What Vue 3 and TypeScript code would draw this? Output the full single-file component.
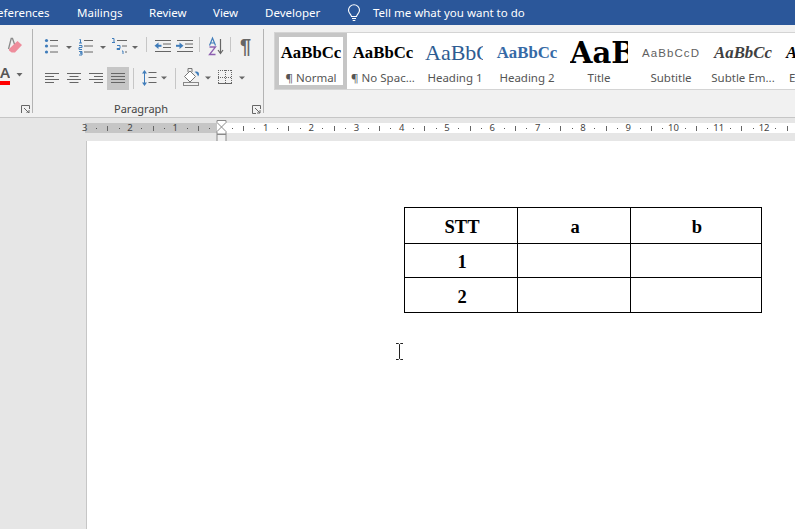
<script setup lang="ts">
interface Tick { x: number; kind: 'dot' | 'line' | 'num'; label?: string }
const pxPerUnit = 45.3
const origin = 220.5
const ticks: Tick[] = []
for (let u = -3; u <= 13; u++) {
  const x = origin + u * pxPerUnit
  if (u !== 0) ticks.push({ x, kind: 'num', label: String(Math.abs(u)) })
  ticks.push({ x: x + pxPerUnit * 0.25, kind: 'dot' })
  ticks.push({ x: x + pxPerUnit * 0.5, kind: 'line' })
  ticks.push({ x: x + pxPerUnit * 0.75, kind: 'dot' })
}
const visibleTicks = ticks.filter(t => t.x < 795 && !(t.x > 214 && t.x < 227))

const tabs = ['eferences', 'Mailings', 'Review', 'View', 'Developer']
const styles = [
  { name: 'Normal', mark: true, cls: 'p-normal', sample: 'AaBbCc', selected: true },
  { name: 'No Spac...', mark: true, cls: 'p-normal', sample: 'AaBbCc' },
  { name: 'Heading 1', mark: false, cls: 'p-h1', sample: 'AaBbC' },
  { name: 'Heading 2', mark: false, cls: 'p-h2', sample: 'AaBbCc' },
  { name: 'Title', mark: false, cls: 'p-title', sample: 'AaB' },
  { name: 'Subtitle', mark: false, cls: 'p-sub', sample: 'AaBbCcD' },
  { name: 'Subtle Em...', mark: false, cls: 'p-em', sample: 'AaBbCc' },
  { name: 'Emphasis', mark: false, cls: 'p-emph', sample: 'AaBbCc' },
]
const rows = [
  ['STT', 'a', 'b'],
  ['1', '', ''],
  ['2', '', ''],
]
</script>

<template>
  <div class="app">
    <header class="tabs">
      <span v-for="t in tabs" :key="t" class="tab">{{ t }}</span>
      <svg class="bulb" width="14" height="18" viewBox="0 0 14 18" fill="none" stroke="#fff" stroke-width="1.1">
        <path d="M4.5 12.5C4.2 10.5 1.5 9.3 1.5 6.2a5.5 5.5 0 0 1 11 0c0 3.1-2.7 4.3-3 6.3z" />
        <path d="M5 14.5h4M5.7 16.5h2.6" />
      </svg>
      <span class="tell">Tell me what you want to do</span>
    </header>

    <section class="ribbon">
      <div class="g-font">
        <svg class="eraser" width="16" height="19" viewBox="0 0 16 19">
          <path d="M1.500 14 4.200 3.500h1.300L8.500 12" fill="none" stroke="#8a8a8a" stroke-width="1.3" />
          <path d="M2 14 10.500 6 15 10l-7 7.500H4.600L2 15.500z" fill="#ee8d9c" />
        </svg>
        <div class="font-color">
          <div class="fc-a"><span class="letter-a">A</span><i class="red"></i></div>
          <svg class="arrow" width="7" height="4" viewBox="0 0 7 4"><path d="M.5 0h6L3.5 3.5z" fill="#666" /></svg>
        </div>
        <svg class="launch launch-font" width="9" height="9" viewBox="0 0 9 9" fill="none" stroke="#666">
          <path d="M8.5 4V.5H.5v8H4M3 3l5 5M8 5v3H5" />
        </svg>
      </div>

      <div class="g-para">
        <div class="row row1">
          <svg class="ml0" width="30" height="20" viewBox="0 0 30 20">
            <g fill="#3f7cba"><circle cx="2.5" cy="4.5" r="1.6" /><circle cx="2.5" cy="10" r="1.6" /><circle cx="2.5" cy="16" r="1.6" /></g>
            <path d="M6 4.5h8M6 10h8M6 16h8" stroke="#666" />
            <path d="M22 10h6l-3 3z" fill="#666" />
          </svg>
          <svg class="ml4" width="30" height="20" viewBox="0 0 30 20">
            <g fill="none" stroke="#3f7cba"><path d="M1.5 3.500h1v3.500M1 7h3M1 9.500h3v2H1v2h3M1 15.500h3v1.500H2h2v2H1" /></g>
            <path d="M6 4.500h9M6 10h9M6 16h9" stroke="#666" />
            <path d="M22 10h6l-3 3z" fill="#666" />
          </svg>
          <svg class="ml3" width="28" height="20" viewBox="0 0 28 20">
            <path d="M1 2.500h2v4M1 6.500h3M6 9.500h3v3H6v1h3M11 15h1v3" fill="none" stroke="#3f7cba" />
            <path d="M6 4.500h10M11 10h5M14 16h2" stroke="#666" />
            <path d="M21 10h6l-3 3z" fill="#666" />
          </svg>
          <i class="sep ml7"></i>
          <svg class="ml7" width="17" height="20" viewBox="0 0 17 20">
            <path d="M1 4.500h16M9 8h8M9 11.500h8M1 15.500h16" stroke="#666" />
            <path d="M7.500 9.800H3.500" stroke="#3f7cba" stroke-width="2" />
            <path d="M.5 9.800 4.500 6.500v6.600z" fill="#3f7cba" />
          </svg>
          <svg class="ml5" width="17" height="20" viewBox="0 0 17 20">
            <path d="M1 4.500h16M9 8h8M9 11.500h8M1 15.500h16" stroke="#666" />
            <path d="M0 9.800h4" stroke="#3f7cba" stroke-width="2" />
            <path d="M7.500 9.800 3.500 6.500v6.600z" fill="#3f7cba" />
          </svg>
          <i class="sep ml6"></i>
          <svg class="ml8" width="16" height="20" viewBox="0 0 16 20">
            <path d="M1.500 9.500 4.500 2l3 7.500M2.500 7h4" fill="none" stroke="#3f7cba" stroke-width="1.2" />
            <path d="M1.500 11h6l-6 7.500h6" fill="none" stroke="#8d5fb0" stroke-width="1.300" />
            <path d="M12.500 3v14M10 14l2.500 3.500L15 14" fill="none" stroke="#666" stroke-width="1.200" />
          </svg>
          <i class="sep ml6"></i>
          <span class="pilcrow">¶</span>
        </div>

        <div class="row row2">
          <svg class="ml1" width="14" height="23" viewBox="0 0 14 23">
            <path d="M0 6.500h14M0 9.500h9M0 12.500h14M0 15.500h9" stroke="#666" />
          </svg>
          <svg class="ml8" width="14" height="23" viewBox="0 0 14 23">
            <path d="M0 6.500h14M2.500 9.500h9M0 12.500h14M2.500 15.500h9" stroke="#666" />
          </svg>
          <svg class="ml8" width="14" height="23" viewBox="0 0 14 23">
            <path d="M0 6.500h14M5 9.500h9M0 12.500h14M5 15.500h9" stroke="#666" />
          </svg>
          <div class="justify">
            <svg width="14" height="23" viewBox="0 0 14 23">
              <path d="M0 6.500h14M0 9.500h14M0 12.500h14M0 15.500h14" stroke="#666" />
            </svg>
          </div>
          <i class="sep ml4 sep2"></i>
          <svg class="ml8" width="26" height="23" viewBox="0 0 26 23">
            <path d="M2.500 4v14" stroke="#3f7cba" />
            <path d="M0 6.500 2.500 3 5 6.500zM0 15.500 2.500 19 5 15.500z" fill="#3f7cba" />
            <path d="M6.500 5.500h8M6.500 10.500h8M6.500 15.500h8" stroke="#666" />
            <path d="M19 9.500h6l-3 3z" fill="#666" />
          </svg>
          <i class="sep ml7 sep2"></i>
          <svg class="ml7" width="28" height="23" viewBox="0 0 28 23">
            <path d="M1.500 9.500 7 4l5.500 5.500L7 15z" fill="#fff" stroke="#777" />
            <path d="M5 5V1.500h4V5" fill="none" stroke="#777" />
            <path d="M11.500 5c2.500-1 4-.5 4.500 2 0 1-.5 2-1 2.500-.5-2-1.500-3.500-3.500-4.500z" fill="#3f7cba" />
            <rect x=".5" y="15.500" width="15" height="3" fill="#f1f1f1" stroke="#888" />
            <path d="M22 9.500h6l-3 3z" fill="#666" />
          </svg>
          <svg class="ml7" width="27" height="23" viewBox="0 0 27 23">
            <path d="M0 3.500h14M0 10.500h14M.5 3v14M7.500 3v14M13.500 3v14" stroke="#666" stroke-dasharray="1 1" fill="none" />
            <path d="M0 16.500h14" stroke="#666" />
            <path d="M21 9.500h6l-3 3z" fill="#666" />
          </svg>
        </div>

        <footer class="g-foot">
          <span class="g-label">Paragraph</span>
          <svg class="launch" width="9" height="9" viewBox="0 0 9 9" fill="none" stroke="#666">
            <path d="M8.500 4V.5H.5v8H4M3 3l5 5M8 5v3H5" />
          </svg>
        </footer>
      </div>

      <div class="gallery">
        <div v-for="s in styles" :key="s.name" class="style" :class="{ selected: s.selected }">
          <div class="preview"><span :class="s.cls">{{ s.sample }}</span></div>
          <div class="style-name"><template v-if="s.mark">¶ </template>{{ s.name }}</div>
        </div>
      </div>
    </section>

    <div class="ruler-bar">
      <div class="ruler">
        <i class="ruler-white"></i>
        <i class="ruler-gray"></i>
        <template v-for="(t, i) in visibleTicks" :key="i">
          <span v-if="t.kind === 'num'" class="r-num" :style="{ left: t.x + 'px' }">{{ t.label }}</span>
          <i v-else :class="t.kind === 'dot' ? 'r-dot' : 'r-line'" :style="{ left: t.x + 'px' }"></i>
        </template>
        <svg class="indent" width="11" height="23" viewBox="0 0 11 23">
          <path d="M1 .5h9v2L5.500 7 10 11.500V14H1v-2.500L5.500 7 1 2.500z" fill="#fff" stroke="#8a8a8a" />
          <rect x="1" y="14.500" width="9" height="7.500" fill="#f1f1f1" stroke="#8a8a8a" />
        </svg>
      </div>
    </div>

    <main class="workspace">
      <div class="page">
        <table class="doc-table">
          <colgroup><col class="c1" /><col class="c2" /><col class="c3" /></colgroup>
          <tbody>
            <tr v-for="(r, i) in rows" :key="i" :class="'r' + i">
              <td v-for="(c, j) in r" :key="j">{{ c }}</td>
            </tr>
          </tbody>
        </table>
        <svg class="ibeam" width="9" height="17" viewBox="0 0 9 17" fill="none" stroke="#222">
          <path d="M1 .5h2.500L4.500 1.500 5.500.5H8M4.500 1.500v14M1 16.500h2.500l1-1 1 1H8" />
        </svg>
      </div>
    </main>
  </div>
</template>

<style>
html, body { margin: 0; padding: 0; overflow: hidden; }
</style>

<style scoped>
.app {
  width: 795px;
  height: 529px;
  overflow: hidden;
  display: flex;
  flex-direction: column;
  font-family: "Noto Sans", "Open Sans", sans-serif;
  background: #e6e6e6;
}
.tabs {
  height: 25px;
  flex: none;
  background: #2b579a;
  color: #fff;
  font-size: 11.5px;
  display: flex;
  align-items: center;
  white-space: nowrap;
}
.tab:nth-child(1) { width: 80px; margin-left: -3px; }
.tab:nth-child(2) { width: 72px; }
.tab:nth-child(3) { width: 64px; }
.tab:nth-child(4) { width: 52px; }
.tab:nth-child(5) { width: 82px; }
.bulb { margin-right: 12px; }

.ribbon {
  height: 92px;
  flex: none;
  background: #f1f1f1;
  border-bottom: 1px solid #c6c6c6;
  display: flex;
  align-items: flex-start;
}
.g-font {
  width: 32px;
  height: 84px;
  margin-top: 4px;
  flex: none;
  position: relative;
  overflow: hidden;
}
.eraser { display: block; margin: 6px 0 0 7px; }
.font-color { display: flex; align-items: center; margin-top: 10px; }
.fc-a { width: 10px; height: 21px; position: relative; flex: none; overflow: hidden; }
.letter-a {
  position: absolute;
  right: 0;
  top: -1px;
  font-size: 15px;
  font-weight: 600;
  line-height: 18px;
  color: #555;
}
.red { position: absolute; left: 0; bottom: 0; width: 10px; height: 4px; background: #f00; }
.arrow { margin-left: 6px; }
.launch { display: block; flex: none; }
.launch-font { position: absolute; left: 21px; top: 76px; }

.g-para {
  width: 232px;
  height: 84px;
  margin-top: 4px;
  flex: none;
  border-left: 1px solid #b4b4b4;
  border-right: 1px solid #b4b4b4;
  padding: 7px 0 0 11px;
  box-sizing: border-box;
}
.row { display: flex; align-items: center; }
.row svg { display: block; flex: none; }
.row1 { height: 20px; }
.row2 { height: 23px; margin-top: 11px; }
.ml0 { margin-left: 0; }
.ml1 { margin-left: 1px; }
.ml3 { margin-left: 3px; }
.ml4 { margin-left: 4px; }
.ml5 { margin-left: 5px; }
.ml6 { margin-left: 6px; }
.ml7 { margin-left: 7px; }
.ml8 { margin-left: 8px; }
.sep { width: 1px; height: 15px; background: #c6c6c6; flex: none; align-self: flex-start; margin-top: 1px; }
.sep2 { height: 21px; }
.pilcrow {
  margin-left: 9px;
  font-size: 20px;
  line-height: 20px;
  color: #666;
  font-family: "Liberation Sans", sans-serif;
  font-weight: 700;
}
.justify {
  width: 22px;
  height: 23px;
  margin-left: 4px;
  background: #c6c6c6;
  display: flex;
  justify-content: center;
  flex: none;
}
.g-foot {
  display: flex;
  align-items: center;
  justify-content: space-between;
  margin-top: 13px;
  padding: 0 2px 0 70px;
  height: 12px;
}
.g-label { font-size: 11px; line-height: 12px; color: #444; }

.gallery {
  margin: 7px 0 0 10px;
  flex: 1;
  min-width: 0;
  height: 58px;
  box-sizing: border-box;
  background: #fff;
  border: 1px solid #d4d4d4;
  border-right: 0;
  display: flex;
  overflow: hidden;
}
.style {
  width: 72px;
  flex: none;
  height: 56px;
  box-sizing: border-box;
  padding: 4px;
  text-align: center;
  white-space: nowrap;
}
.style.selected { border: 4px solid #c6c6c6; padding: 0; }
.preview {
  height: 32px;
  overflow: hidden;
  display: flex;
  justify-content: center;
  align-items: center;
  color: #000;
}
.preview span { flex: none; }
.p-normal { font: 700 16.800px "Liberation Serif", serif; }
.p-h1 { font: 400 22px "Liberation Serif", serif; color: #2e5c92; width: 58px; overflow: hidden; text-align: left; margin-left: -2px; }
.p-h2 { font: 700 16.800px "Liberation Serif", serif; color: #366aa6; }
.p-title { font: 700 29px "DejaVu Serif", serif; width: 58px; overflow: hidden; text-align: left; }
.p-sub { font: 400 11.500px "Liberation Sans", sans-serif; letter-spacing: 1.100px; color: #5f5f5f; }
.p-em { font: italic 700 16.800px "Liberation Serif", serif; color: #404040; }
.p-emph { font: italic 700 16.800px "Liberation Serif", serif; }
.style-name { font-size: 11.500px; line-height: 14px; color: #555; margin-top: 2px; }

.ruler-bar {
  height: 23px;
  flex: none;
  box-sizing: border-box;
  padding-top: 5px;
  background: #e6e6e6;
}
.ruler { position: relative; height: 10px; }
.ruler-white { position: absolute; left: 217px; right: 0; top: 0; height: 10px; background: #fff; }
.ruler-gray { position: absolute; left: 85px; top: 0; width: 132px; height: 10px; background: #c6c6c6; }
.r-num {
  position: absolute;
  top: -1px;
  width: 16px;
  margin-left: -8px;
  text-align: center;
  font-size: 9.500px;
  line-height: 12px;
  color: #444;
}
.r-dot { position: absolute; top: 5px; width: 1px; height: 1px; background: #555; }
.r-line { position: absolute; top: 3px; width: 1px; height: 5px; background: #666; }
.indent { position: absolute; left: 216px; top: -3px; }

.workspace { flex: 1; min-height: 0; display: flex; padding-left: 86px; }
.page {
  flex: 1;
  background: #fff;
  border-left: 1px solid #c6c6c6;
  box-sizing: border-box;
  padding: 66px 0 0 317px;
  position: relative;
}
.doc-table {
  border-collapse: collapse;
  table-layout: fixed;
  width: 358px;
  font: 700 18.500px "Liberation Serif", serif;
  color: #000;
}
.c1, .c2 { width: 113px; }
.c3 { width: 131px; }
.doc-table td { border: 1px solid #000; text-align: center; padding: 3px 0 0 2px; box-sizing: border-box; line-height: 20px; }
.r0 td { height: 36px; }
.r1 td { height: 34px; }
.r2 td { height: 35px; }
.ibeam { position: absolute; left: 308px; top: 202px; }
</style>
